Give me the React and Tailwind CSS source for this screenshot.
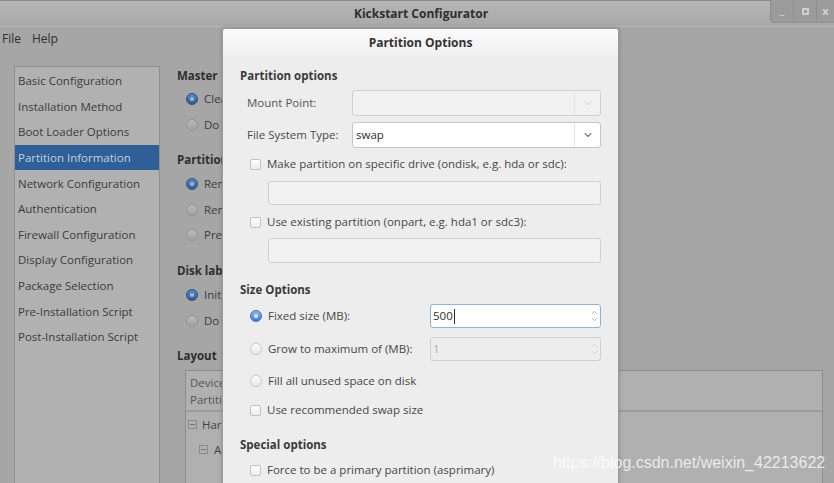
import { ChevronDown, ChevronUp } from 'lucide-react'

const sideItems = [
  'Basic Configuration',
  'Installation Method',
  'Boot Loader Options',
  'Partition Information',
  'Network Configuration',
  'Authentication',
  'Firewall Configuration',
  'Display Configuration',
  'Package Selection',
  'Pre-Installation Script',
  'Post-Installation Script',
]

function Radio({ on, dim }) {
  if (on) {
    return (
      <span className={`w-[12px] h-[12px] rounded-full border shrink-0 flex items-center justify-center ${dim ? 'border-[#2c4f7a] bg-gradient-to-b from-[#5c88bd] to-[#2f5f98]' : 'border-[#3e6ea8] bg-gradient-to-b from-[#8ab6ea] to-[#3f7fcf]'}`}>
        <span className={`w-[4px] h-[4px] rounded-full ${dim ? 'bg-[#9fb8d4]' : 'bg-[#d9e8fa]'}`} />
      </span>
    )
  }
  return (
    <span className={`w-[12px] h-[12px] rounded-full border shrink-0 ${dim ? 'border-[#939393] bg-gradient-to-b from-[#b9b9b9] to-[#a2a2a2]' : 'border-[#c8c8c8] bg-gradient-to-b from-[#ffffff] to-[#e8e8e8]'}`} />
  )
}

function Check() {
  return <span className="w-[11px] h-[11px] rounded-[2px] border border-[#c2c2c2] bg-gradient-to-b from-[#ffffff] to-[#ececec] shrink-0" />
}

function Combo({ value, disabled }) {
  return (
    <div className={`ml-auto w-[249px] h-full flex rounded-[3px] border ${disabled ? 'border-[#d0d0d0] bg-[#f1f1f1]' : 'border-[#c6c6c6] bg-white'}`}>
      <div className="flex-1 flex items-center pl-[3px] text-[#2e2e2e]">{value}</div>
      <div className="w-[26px] border-l border-[#e2e2e2] flex items-center justify-center">
        <ChevronDown size={12} strokeWidth={disabled ? 1.5 : 2.2} className={disabled ? 'text-[#c4c4c4]' : 'text-[#7a7a7a]'} />
      </div>
    </div>
  )
}

function Spin({ value, focus, disabled }) {
  return (
    <div className={`w-[171px] h-full flex rounded-[3px] border ${focus ? 'border-[#8fb2de] bg-white' : 'border-[#d0d0d0] bg-[#ededed]'}`}>
      <div className={`flex-1 flex items-center pl-[2px] ${disabled ? 'text-[#b0b0b0]' : 'text-[#2e2e2e]'}`}>
        {value}
        {focus && <span className="w-px h-[15px] bg-[#2e2e2e] ml-px" />}
      </div>
      <div className="w-[12px] flex flex-col items-center justify-center -space-y-[2px]">
        <ChevronUp size={9} strokeWidth={2} className={disabled ? 'text-[#c8c8c8]' : 'text-[#9a9a9a]'} />
        <ChevronDown size={9} strokeWidth={2} className={disabled ? 'text-[#c8c8c8]' : 'text-[#9a9a9a]'} />
      </div>
    </div>
  )
}

function OptRow({ children, mt = '' }) {
  return <div className={`h-[18px] flex items-center gap-[6px] pl-[10px] whitespace-nowrap text-[#474747] ${mt}`}>{children}</div>
}

function Expander() {
  return (
    <span className="w-[9px] h-[9px] border border-[#8a8a8a] flex items-center justify-center">
      <span className="w-[5px] h-px bg-[#777]" />
    </span>
  )
}

export default function App() {
  return (
    <div className="relative w-[834px] h-[483px] overflow-hidden bg-[#a6a6a6] font-['Open_Sans',sans-serif] text-[11.5px] text-[#3c3c3c]">
      {/* title bar */}
      <div className="h-[27px] border-t border-[#8c8c8c] border-b border-b-[#b6b6b6] bg-gradient-to-b from-[#b6b6b6] to-[#a8a8a8] flex items-center justify-center">
        <span className="ml-[8px] text-[12px] font-bold text-[#2f2f2f]">Kickstart Configurator</span>
      </div>
      <div className="absolute right-0 top-0 h-[23px] w-[64px] flex rounded-bl-[4px] bg-[#9b9b9b] border-l border-b border-[#8e8e8e] text-[#d4d4d4] text-[11px] font-bold">
        <span className="w-[23px] flex items-end justify-center pb-[4px] border-r border-[#8e8e8e]">_</span>
        <span className="w-[23px] flex items-center justify-center border-r border-[#8e8e8e]">
          <span className="w-[7px] h-[7px] border-2 border-[#d0d0d0]" />
        </span>
        <span className="flex-1 flex items-center justify-center">x</span>
      </div>

      {/* menu bar */}
      <div className="h-[24px] flex items-center gap-[11px] pl-[2px] text-[12px] text-[#2f2f2f]">
        <span>File</span>
        <span>Help</span>
      </div>

      <div className="flex mt-[15px]">
        {/* sidebar */}
        <div className="ml-[14px] w-[146px] h-[420px] border border-[#8f8f8f] bg-[#b1b1b1] pt-px text-[#3c3c3c]">
          {sideItems.map((s, i) => (
            <div key={s} className={`h-[25.6px] flex items-center pl-[3px] ${i === 3 ? 'bg-[#2f5f98] text-[#c3d0df]' : ''}`}>{s}</div>
          ))}
        </div>

        {/* main panel */}
        <div className="flex-1 pl-[17px]">
          <div className="h-[18px] mt-[1px] flex items-center font-bold text-[#2f2f2f]">Master</div>
          <div className="pl-[9px] mt-[5px] space-y-[8px]">
            <div className="h-[18px] flex items-center gap-[6px]"><Radio on dim />Clear</div>
            <div className="h-[18px] flex items-center gap-[6px]"><Radio dim />Do</div>
          </div>
          <div className="h-[18px] mt-[17px] flex items-center font-bold text-[#2f2f2f]">Partition</div>
          <div className="pl-[9px] mt-[6px] space-y-[7.5px]">
            <div className="h-[18px] flex items-center gap-[6px]"><Radio on dim />Remove</div>
            <div className="h-[18px] flex items-center gap-[6px]"><Radio dim />Remove</div>
            <div className="h-[18px] flex items-center gap-[6px]"><Radio dim />Preserve</div>
          </div>
          <div className="h-[18px] mt-[18px] flex items-center font-bold text-[#2f2f2f]">Disk label</div>
          <div className="pl-[9px] mt-[6px] space-y-[8px]">
            <div className="h-[18px] flex items-center gap-[6px]"><Radio on dim />Initialize</div>
            <div className="h-[18px] flex items-center gap-[6px]"><Radio dim />Do</div>
          </div>
          <div className="h-[18px] mt-[17px] flex items-center font-bold text-[#2f2f2f]">Layout</div>
          <div className="ml-[8px] mr-[11px] mt-[5px] h-[120px] border-l border-t border-r border-[#8c8c8c] bg-[#b0b0b0]">
            <div className="h-[41px] border-b-2 border-[#9c9c9c] flex flex-col justify-center pl-[4px] leading-[17px] text-[#555]">
              <span>Device/</span>
              <span>Partition</span>
            </div>
            <div className="h-[25px] flex items-center gap-[5px] pl-[2px] text-[#444]">
              <Expander />
              Hard Drives
            </div>
            <div className="h-[25px] flex items-center gap-[6px] pl-[13px] text-[#444]">
              <Expander />
              Auto
            </div>
          </div>
        </div>
      </div>

      {/* dialog */}
      <div className="absolute left-[222px] top-[28px] w-[397px] h-[470px] border border-[#9a9a9a] rounded-t-[3px] bg-[#ededed] shadow-[0_0_4px_rgba(0,0,0,0.2)]">
        <div className="h-[27px] rounded-t-[3px] bg-gradient-to-b from-[#fafafa] to-[#f1f1f1] flex items-center justify-center text-[12px] font-bold text-[#333]">Partition Options</div>
        <div className="px-[17px]">
          <div className="h-[18px] mt-[11px] flex items-center font-bold text-[#3a3a3a]">Partition options</div>
          <div className="h-[26px] mt-[5px] flex items-center pl-[7px] text-[#555]">
            Mount Point:
            <Combo value="" disabled />
          </div>
          <div className="h-[26px] mt-[6px] flex items-center pl-[7px] text-[#4a4a4a]">
            File System Type:
            <Combo value="swap" />
          </div>
          <OptRow mt="mt-[7px]"><Check />Make partition on specific drive (ondisk, e.g. hda or sdc):</OptRow>
          <div className="ml-[28px] mt-[8px] h-[24px] rounded-[3px] border border-[#d0d0d0] bg-[#f1f1f1]" />
          <OptRow mt="mt-[8px]"><Check />Use existing partition (onpart, e.g. hda1 or sdc3):</OptRow>
          <div className="ml-[28px] mt-[7px] h-[25px] rounded-[3px] border border-[#d0d0d0] bg-[#f1f1f1]" />

          <div className="h-[18px] mt-[18px] flex items-center font-bold text-[#3a3a3a]">Size Options</div>
          <div className="h-[24px] mt-[5px] flex items-center">
            <OptRow><Radio on />Fixed size (MB):</OptRow>
            <div className="ml-auto h-full"><Spin value="500" focus /></div>
          </div>
          <div className="h-[24px] mt-[9px] flex items-center">
            <OptRow><Radio />Grow to maximum of (MB):</OptRow>
            <div className="ml-auto h-full"><Spin value="1" disabled /></div>
          </div>
          <OptRow mt="mt-[11px]"><Radio />Fill all unused space on disk</OptRow>
          <OptRow mt="mt-[11px]"><Check />Use recommended swap size</OptRow>

          <div className="h-[18px] mt-[17px] flex items-center font-bold text-[#3a3a3a]">Special options</div>
          <OptRow mt="mt-[7px]"><Check />Force to be a primary partition (asprimary)</OptRow>
        </div>
      </div>

      {/* watermark */}
      <div className="absolute left-[553px] top-[451px] text-[16px] font-['Liberation_Sans',sans-serif] text-white/75">https://blog.csdn.net/weixin_42213622</div>
    </div>
  )
}
